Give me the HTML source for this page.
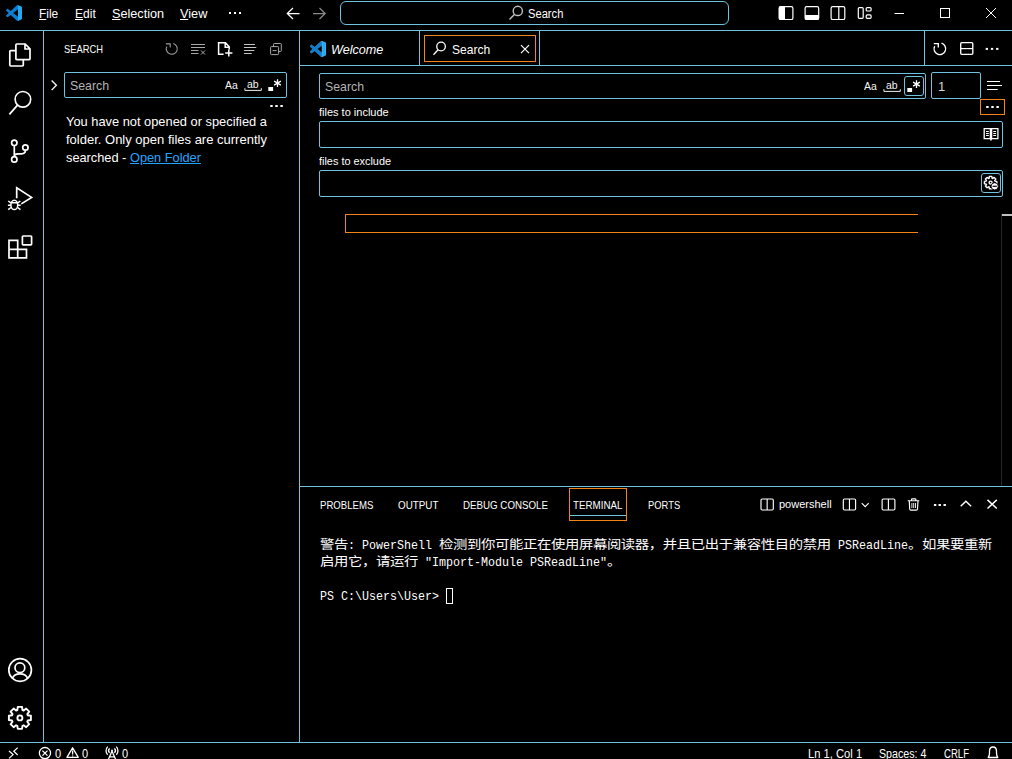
<!DOCTYPE html>
<html lang="en">
<head>
<meta charset="utf-8">
<title>Search - Visual Studio Code</title>
<style>
*{box-sizing:border-box;margin:0;padding:0}
html,body{width:1012px;height:759px;overflow:hidden;background:#000;color:#fff}
body{position:relative;font-family:"Liberation Sans","Noto Sans CJK SC",sans-serif;font-size:13px;-webkit-font-smoothing:antialiased}
.a{position:absolute}
.t{position:absolute;transform-origin:0 0;white-space:nowrap;line-height:1;color:#fff}
.hl{position:absolute;height:1px;background:#6fc3df}
.vl{position:absolute;width:1px;background:#6fc3df}
.box{position:absolute;border:1px solid #6fc3df;border-radius:2px}
.obox{position:absolute;border:1px solid #f38518}
svg{position:absolute;overflow:visible}
.s{fill:none;stroke:#fff;stroke-width:1}
.f{fill:#fff;stroke:none}
u{text-decoration:underline;text-underline-offset:1px}
.la{font-family:"Liberation Mono",monospace;font-size:13.5px;transform:scaleX(.864);white-space:pre}
.cj{font-family:"Liberation Sans","Noto Sans CJK SC","WenQuanYi Zen Hei",sans-serif;font-size:12.4px;letter-spacing:-0.33px;transform:scaleX(1.16)}
</style>
</head>
<body>

<!-- ============ frame lines ============ -->
<div class="hl" style="left:0;top:30px;width:1012px"></div>
<div class="vl" style="left:43px;top:30px;height:713px"></div>
<div class="vl" style="left:299px;top:30px;height:713px"></div>
<div class="hl" style="left:299px;top:65px;width:713px"></div>
<div class="hl" style="left:299px;top:486px;width:713px"></div>
<div class="hl" style="left:0;top:742px;width:1012px"></div>

<!-- ============ title bar ============ -->
<div id="title">
<div class="t" id="m1" style="left:39px;top:7px;transform:scaleX(0.914)"><u>F</u>ile</div>
<div class="t" id="m2" style="left:75px;top:7px;transform:scaleX(0.926)"><u>E</u>dit</div>
<div class="t" id="m3" style="left:112px;top:7px;transform:scaleX(0.975)"><u>S</u>election</div>
<div class="t" id="m4" style="left:180px;top:7px;transform:scaleX(0.98)"><u>V</u>iew</div>
<div class="box" style="left:340px;top:1px;width:389px;height:24px;border-radius:6px"></div>
<div class="t" id="cc" style="left:528px;top:8px;font-size:12px;transform:scaleX(0.93)">Search</div>
</div>

<!-- ============ activity bar ============ -->
<div id="act"></div>

<!-- ============ side bar ============ -->
<div id="side">
<div class="t" id="sh" style="left:64px;top:44px;font-size:11px;transform:scaleX(0.85)">SEARCH</div>
<div class="box" style="left:64px;top:72px;width:223px;height:26px"></div>
<div class="t" id="sp" style="left:70px;top:79px;color:#b4b4b4;transform:scaleX(0.95)">Search</div>
<div class="t" id="saa" style="left:225px;top:80px;font-size:11px;color:#f4f4f4;transform:scaleX(0.95)">Aa</div>
<div class="t" id="sab" style="left:247px;top:79px;font-size:11px;color:#f4f4f4;transform:scaleX(0.95)">ab</div>
<div class="t" id="s1" style="left:66px;top:115px;transform:scaleX(0.988)">You have not opened or specified a</div>
<div class="t" id="s2" style="left:66px;top:133px">folder. Only open files are currently</div>
<div class="t" id="s3" style="left:66px;top:151px;transform:scaleX(0.983)">searched - <span id="s3l" style="color:#21a6ff;text-decoration:underline">Open Folder</span></div>
</div>

<!-- ============ editor ============ -->
<div id="ed">
<div class="vl" style="left:419px;top:31px;height:34px"></div>
<div class="vl" style="left:539px;top:31px;height:34px"></div>
<div class="vl" style="left:924px;top:31px;height:34px"></div>
<div class="obox" style="left:424px;top:35px;width:112px;height:27px"></div>
<div class="t" id="tw" style="left:331px;top:43px;font-style:italic;transform:scaleX(0.97)">Welcome</div>
<div class="t" id="ts" style="left:452px;top:43px;transform:scaleX(0.927)">Search</div>

<div class="box" style="left:319px;top:73px;width:607px;height:26px"></div>
<div class="t" id="ep" style="left:325px;top:80px;color:#b4b4b4;transform:scaleX(0.9475)">Search</div>
<div class="t" id="eaa" style="left:864px;top:81px;font-size:11px;color:#f4f4f4;transform:scaleX(0.95)">Aa</div>
<div class="t" id="eab" style="left:886px;top:80px;font-size:11px;color:#f4f4f4;transform:scaleX(0.95)">ab</div>
<div class="box" style="left:904px;top:76px;width:20px;height:20px;border-radius:3px"></div>
<div class="box" style="left:931px;top:72px;width:50px;height:27px"></div>
<div class="t" id="e1" style="left:938px;top:80px;color:#d6d6d6">1</div>
<div class="obox" style="left:980px;top:99px;width:25px;height:16px"></div>
<div class="t" id="fi" style="left:319px;top:107px;font-size:11px">files to include</div>
<div class="box" style="left:319px;top:121px;width:684px;height:27px"></div>
<div class="t" id="fe" style="left:319px;top:156px;font-size:11px;transform:scaleX(0.99)">files to exclude</div>
<div class="box" style="left:319px;top:170px;width:684px;height:27px"></div>
<div class="box" style="left:981px;top:173px;width:20px;height:20px;border-radius:3px"></div>
<div class="a" style="left:345px;top:214px;width:573px;height:19px;border:1px solid #f38518;border-right:none"></div>
<div class="a" style="left:1001px;top:214px;width:1px;height:272px;background:#262626"></div>
<div class="a" style="left:1002px;top:214px;width:10px;height:2px;background:#c0c0c0"></div>
</div>

<!-- ============ panel ============ -->
<div id="panel">
<div class="t" id="p1" style="left:320px;top:500px;font-size:11px;transform:scaleX(0.874)">PROBLEMS</div>
<div class="t" id="p2" style="left:398px;top:500px;font-size:11px;transform:scaleX(0.893)">OUTPUT</div>
<div class="t" id="p3" style="left:463px;top:500px;font-size:11px;transform:scaleX(0.886)">DEBUG CONSOLE</div>
<div class="t" id="p4" style="left:573px;top:500px;font-size:11px;transform:scaleX(0.889)">TERMINAL</div>
<div class="t" id="p5" style="left:648px;top:500px;font-size:11px;transform:scaleX(0.853)">PORTS</div>
<div class="obox" style="left:569px;top:488px;width:58px;height:33px"></div>
<div class="hl" style="left:570px;top:515px;width:56px"></div>
<div class="t" id="ps" style="left:779px;top:499px;font-size:11px">powershell</div>

<div class="t cj" id="l1" style="left:320px;top:539px">警告</div>
<div class="t la" id="l1b" style="left:348px;top:539px">: PowerShell </div>
<div class="t cj" id="l1c" style="left:439px;top:539px">检测到你可能正在使用屏幕阅读器，并且已出于兼容性目的禁用</div>
<div class="t la" id="l1d" style="left:831px;top:539px"> PSReadLine</div>
<div class="t cj" id="l1e" style="left:908px;top:539px">。如果要重新</div>
<div class="t cj" id="l2" style="left:320px;top:556px">启用它，请运行</div>
<div class="t la" id="l2b" style="left:418px;top:556px"> "Import-Module PSReadLine"</div>
<div class="t cj" id="l2c" style="left:607px;top:556px">。</div>
<div class="t la" id="l3" style="left:320px;top:590px">PS C:\Users\User&gt;</div>
<div class="a" style="left:446px;top:588px;width:7px;height:16px;border:1px solid #fff"></div>
</div>

<!-- ============ status bar ============ -->
<div id="status">
<div class="t" id="st1" style="left:55px;top:748px;font-size:12px;transform:scaleX(0.92)">0</div>
<div class="t" id="st2" style="left:82px;top:748px;font-size:12px;transform:scaleX(0.92)">0</div>
<div class="t" id="st3" style="left:122px;top:748px;font-size:12px;transform:scaleX(0.92)">0</div>
<div class="t" id="st4" style="left:808px;top:748px;font-size:12px;transform:scaleX(0.933)">Ln 1, Col 1</div>
<div class="t" id="st5" style="left:879px;top:748px;font-size:12px;transform:scaleX(0.89)">Spaces: 4</div>
<div class="t" id="st6" style="left:944px;top:748px;font-size:12px;transform:scaleX(0.8)">CRLF</div>
</div>

<!-- ============ icon overlay ============ -->
<svg id="ico" width="1012" height="759" viewBox="0 0 1012 759" style="left:0;top:0">
<defs>
<symbol id="vsc" viewBox="0 0 100 100">
<path fill="#0a7ed0" fill-rule="evenodd" d="M70.9119 99.3171C72.4869 99.9307 74.2828 99.8914 75.8725 99.1264L96.4608 89.2197C98.6242 88.1787 100 85.9892 100 83.5872V16.4133C100 14.0113 98.6243 11.8218 96.4609 10.7808L75.8725 0.873756C73.7862 -0.130129 71.3446 0.11576 69.5135 1.44695C69.252 1.63711 69.0028 1.84943 68.769 2.08341L29.3551 38.0415L12.1872 25.0096C10.589 23.7965 8.35363 23.8959 6.86933 25.2461L1.36303 30.2549C-0.452552 31.9064 -0.454633 34.7627 1.35853 36.417L16.2471 50.0001L1.35853 63.5832C-0.454633 65.2374 -0.452552 68.0938 1.36303 69.7453L6.86933 74.7541C8.35363 76.1043 10.589 76.2037 12.1872 74.9905L29.3551 61.9587L68.769 97.9167C69.3925 98.5406 70.1246 99.0104 70.9119 99.3171ZM75.0152 27.2989L45.1091 50.0001L75.0152 72.7012V27.2989Z"/>
<path fill="#23a9f2" d="M70.9 0.7C72.5 0.1 74.3 0.1 75.9 0.9L96.5 10.8C98.6 11.8 100 14 100 16.4V83.6C100 86 98.6 88.2 96.5 89.2L75.9 99.1C74.3 99.9 72.5 99.9 70.9 99.3C73.3 100 75 97.6 75 95.2V4.8C75 2.4 73.3 0 70.9 0.7Z"/>
</symbol>
</defs>

<!-- title bar -->
<g id="g-title">
<use href="#vsc" x="6" y="5" width="16" height="16"/>
<rect class="f" x="229" y="12" width="2" height="2"/><rect class="f" x="234" y="12" width="2" height="2"/><rect class="f" x="239" y="12" width="2" height="2"/>
<path class="s" style="stroke-width:1.250" d="M299.500 13.500H287.500M293 8L287.300 13.500L293 19"/>
<path class="s" style="stroke:#8a8a8a;stroke-width:1.250" d="M313 13.5H325M319.5 8L325.2 13.5L319.5 19"/>
<g style="stroke:#c0c0c0;stroke-width:1.4" class="s"><circle cx="517.800" cy="10.900" r="4.600"/><path d="M514.600 14.300L509.500 19.600"/></g>
<g class="s" style="stroke-width:1.2">
<rect x="779.1" y="6.6" width="13.8" height="12.9" rx="1.6"/>
<rect x="805.1" y="6.6" width="13.6" height="12.9" rx="1.6"/>
<rect x="831.1" y="6.6" width="13.7" height="12.9" rx="1.6"/><path d="M838.8 6.6V19.5"/>
<rect x="858.3" y="7.6" width="4.9" height="10.7" rx="1"/>
<rect x="866.2" y="7.6" width="4.9" height="3.4" rx="1"/>
<rect x="866.2" y="14.9" width="4.9" height="3.4" rx="1"/>
</g>
<path class="f" d="M779 7.5Q779 6.5 780 6.500H785V19.5H780Q779 19.5 779 18.5Z"/>
<path class="f" d="M805 15H819V18.500Q819 19.5 818 19.500H806Q805 19.5 805 18.500Z"/>
<path class="s" d="M894.500 13.500H904"/>
<rect class="s" x="940.500" y="8.500" width="9" height="9"/>
<path class="s" d="M986 8L996 18M996 8L986 18"/>
</g>
<!-- activity bar -->
<g id="g-act" class="s" style="stroke-width:1.7">
<path d="M16.800 44H25.200L30 48.900V58.800Q30 59.700 29.100 59.700H16.800Q15.900 59.700 15.900 58.800V44.900Q15.900 44 16.800 44ZM25 44.200V49H29.800"/>
<path d="M15.900 50.600H10.700Q9.800 50.600 9.800 51.500V65.100Q9.800 66 10.700 66H22.400Q23.300 66 23.300 65.100V59.700"/>
<circle cx="22.900" cy="99.300" r="7.800" style="stroke-width:1.6"/><path d="M17.500 105.100L9.400 114.400" style="stroke-width:1.7"/>
<circle cx="14.300" cy="142.800" r="2.700"/><circle cx="14.300" cy="159.400" r="2.700"/><circle cx="25.400" cy="147.500" r="2.700"/>
<path d="M14.300 145.600V156.600M25.400 150.300Q25.400 153.800 21.500 153.800H17.800Q14.300 153.800 14.300 156.600"/>
<path d="M16.700 198.200V187.900L31.600 197.400L21.300 203.900"/>
<g style="stroke-width:1.500"><ellipse cx="14.300" cy="204.900" rx="3.400" ry="4.700"/><path d="M11.200 202.800H17.400M8.200 201L10.900 202.800M20.400 201L17.700 202.800M7.900 205.300H10.900M17.700 205.300H20.700M8.200 209.600L10.900 207.500M20.400 209.600L17.700 207.500"/></g>
<path d="M9 240.400H17.700V249.300H26.500V257.800H9ZM9 249.300H17.700V257.800"/>
<rect x="22.400" y="236" width="9.200" height="8.800" rx="0.800"/>
<g style="stroke-width:1.7"><circle cx="20.100" cy="670" r="11.300"/><circle cx="19.900" cy="667.700" r="4.900"/><path d="M12.300 678.600Q14 673.900 20 673.900Q26 673.900 27.700 678.600"/></g>
</g>
<g id="g-gear" class="s" style="stroke-width:1.9;stroke-linejoin:round"><path d="M17.3 710.0L17.8 706.9L22.0 706.9L22.5 710.0L23.7 710.5L26.2 708.6L29.2 711.6L27.3 714.1L27.8 715.3L30.9 715.8L30.9 720.0L27.8 720.5L27.3 721.7L29.2 724.2L26.2 727.2L23.7 725.3L22.5 725.8L22.0 728.9L17.8 728.9L17.3 725.8L16.1 725.3L13.6 727.2L10.6 724.2L12.5 721.7L12.0 720.5L8.9 720.0L8.9 715.8L12.0 715.3L12.5 714.1L10.6 711.6L13.6 708.6L16.1 710.5Z"/><circle cx="19.900" cy="717.900" r="2.500"/></g>
<!-- side bar -->
<g id="g-side" class="s">
<g style="stroke:#9a9a9a;stroke-width:1.100"><path d="M173.300 43.500A5.500 5.500 0 1 1 166.800 46.400M165.900 43.900H170.200V47.500"/></g>
<g style="stroke:#a8a8a8"><path d="M191 44.500H205M191 47.500H205M191 50.500H198.500M191 53.500H198.500M201 50.500L205 54.500M205 50.500L201 54.500"/></g>
<g style="stroke-width:1.500"><path d="M223.600 54.300H218.600V42.800H225.500L229.200 46.700V49.600M225.200 43V47.200H229"/><path d="M225.200 53H232.400M228.800 49.400V56.600"/></g>
<g style="stroke:#c4c4c4"><path d="M244 44.500H255M244 47.500H256.300M244 50.500H254.400M244 53.500H251.800"/></g>
<g style="stroke:#a8a8a8"><path d="M273.500 46.300V44.300Q273.500 43.500 274.300 43.500H280.500Q281.300 43.500 281.300 44.300V50.700Q281.300 51.500 280.500 51.500H278.800"/><rect x="270.600" y="46.600" width="8" height="8" rx="0.800"/><path d="M272.600 50.600H276.600"/></g>
<path style="stroke-width:1.300" d="M51.600 80.500L56.400 85.300L51.600 90.100"/>
<g style="stroke:#f0f0f0"><path d="M244.900 88.200V90.400H261.300V88.200"/></g>
<rect class="f" x="268.300" y="87" width="4.800" height="4" style="stroke:none"/>
<path style="stroke-width:1.300" d="M277.500 79.200V87M274.100 81.100L280.900 85.100M280.900 81.100L274.100 85.100"/>
<g class="f" style="stroke:none"><rect x="270.300" y="105" width="2.400" height="2"/><rect x="275.300" y="105" width="2.400" height="2"/><rect x="280.400" y="105" width="2.400" height="2"/></g>
</g>
<!-- editor -->
<g id="g-ed" class="s">
<use href="#vsc" x="310" y="41" width="16" height="16"/>
<g style="stroke-width:1.300"><circle cx="441.050" cy="46.500" r="4.300"/><path d="M438.100 49.700L433.500 54.700"/></g>
<path style="stroke-width:1.200" d="M521 45.200L529 53.200M529 45.200L521 53.200"/>
<g style="stroke-width:1.200"><path style="stroke-width:1.35" d="M941.500 43.200A5.800 5.800 0 1 1 934.700 46.100M933.800 43.600H938.300V47.400"/>
<rect style="stroke-width:1.35" x="960.700" y="42.600" width="12.100" height="11.800" rx="1.100"/><path d="M960.700 48.600H972.800"/></g>
<g class="f" style="stroke:none"><rect x="985.700" y="47.900" width="2.300" height="2"/><rect x="990.900" y="47.900" width="2.300" height="2"/><rect x="996.100" y="47.900" width="2.300" height="2"/></g>
<g style="stroke:#f0f0f0"><path d="M883.900 89.200V91.400H900.300V89.200"/></g>
<rect class="f" x="907.300" y="88" width="4.800" height="4" style="stroke:none"/>
<path style="stroke-width:1.300" d="M916.500 80.200V88M913.100 82.100L919.900 86.100M919.900 82.100L913.100 86.100"/>
<path d="M987 81.500H1000M987 85.500H1002M987 89.500H997.700"/>
<g class="f" style="stroke:none"><rect x="986.200" y="106" width="2.400" height="2"/><rect x="991.300" y="106" width="2.400" height="2"/><rect x="996.400" y="106" width="2.400" height="2"/></g>
<g style="stroke-width:1.300"><path d="M984.200 128.600H990.400V138.600H984.200ZM991.600 128.600H997.900V138.600H991.600ZM990.400 138.800L991 139.900L991.600 138.800"/><path d="M986 131.500H988.800M986 133.500H988.800M986 135.500H988.800M993.300 131.500H996.100M993.300 133.500H996.100M993.300 135.500H996.100" style="stroke-width:1"/></g>
<g style="stroke-width:1.400;stroke-linejoin:round"><path d="M989.1 178.3L989.4 176.4L991.8 176.4L992.1 178.3L992.6 178.5L994.1 177.4L995.8 179.1L994.7 180.6L994.9 181.1L996.8 181.4L996.8 183.8L994.9 184.1L994.7 184.6L995.8 186.1L994.1 187.8L992.6 186.7L992.1 186.9L991.8 188.8L989.4 188.8L989.1 186.9L988.6 186.7L987.1 187.8L985.4 186.1L986.5 184.6L986.3 184.1L984.4 183.8L984.4 181.4L986.3 181.1L986.5 180.6L985.4 179.1L987.1 177.4L988.6 178.5Z"/><circle cx="990.600" cy="182.600" r="1.500"/></g>
<circle cx="994.700" cy="186.300" r="3.600" style="fill:#fff;stroke:#000;stroke-width:0.900"/><path d="M992.600 186.300H996.800" style="stroke:#000;stroke-width:1.200"/>
</g>
<!-- panel + status -->
<g id="g-panel" class="s" style="stroke-width:1.150">
<rect x="761" y="499" width="12.300" height="11" rx="1.200"/><path d="M767.150 499V510"/>
<rect x="843.300" y="499" width="12.300" height="11" rx="1.200"/><path d="M849.450 499V510"/>
<path d="M861.700 503.200L865.200 506.600L868.700 503.200"/>
<rect x="882.100" y="499" width="12.800" height="11" rx="1.200"/><path d="M888.400 499V510"/>
<path d="M907.700 500.700H919.300M911.500 500.500V499.500Q911.500 498.800 912.200 498.800H915.200Q915.900 498.800 915.900 499.500V500.500M909.300 500.900L909.700 509Q909.800 510.100 910.900 510.100H916.300Q917.400 510.100 917.500 509L918 500.900"/>
<path d="M911.900 503V508M913.700 503V508M915.500 503V508" style="stroke-width:0.900"/>
<g class="f" style="stroke:none"><rect x="933.900" y="504" width="2.400" height="2"/><rect x="938.500" y="504" width="2.400" height="2"/><rect x="943.500" y="504" width="2.400" height="2"/></g>
<path style="stroke-width:1.450" d="M960.700 506.200L965.900 501.300L971.100 506.200"/>
<path style="stroke-width:1.450" d="M987.500 499.900L996.800 508.500M996.800 499.900L987.500 508.500"/>
</g>
<g id="g-status" class="s" style="stroke-width:1.300">
<path d="M17.700 747.600L13.800 751.300L17.700 755M9 751L13.100 754.600L9 758.400" style="stroke-width:1.200"/>
<circle cx="44.950" cy="753.100" r="5.600"/><path d="M42.400 750.600L47.500 755.600M47.500 750.600L42.400 755.600"/>
<path d="M72.600 747.800L78.300 757.300H66.900Z" style="stroke-linejoin:round"/><path d="M72.600 750.600V754.600M72.600 755.500V756.600"/>
<path d="M112 751.300L108.300 759.500M112 751.300L115.700 759.500M109.600 756.800H114.400"/>
<circle cx="112" cy="750.600" r="1" class="f" style="stroke:none"/>
<path d="M109.600 748.400A3.200 3.200 0 0 0 109.600 752.900M114.400 748.400A3.200 3.200 0 0 1 114.400 752.900M107.700 746.600A5.800 5.800 0 0 0 107.700 754.700M116.300 746.600A5.800 5.800 0 0 1 116.300 754.700"/>
<path d="M988.200 757.500Q989.500 756 989.500 753V751.200Q989.500 747 993 747Q996.500 747 996.500 751.200V753Q996.500 756 997.800 757.500Z" style="stroke-linejoin:round"/>
</g>
<!--ICONS-NEXT-->



</svg>

</body>
</html>
